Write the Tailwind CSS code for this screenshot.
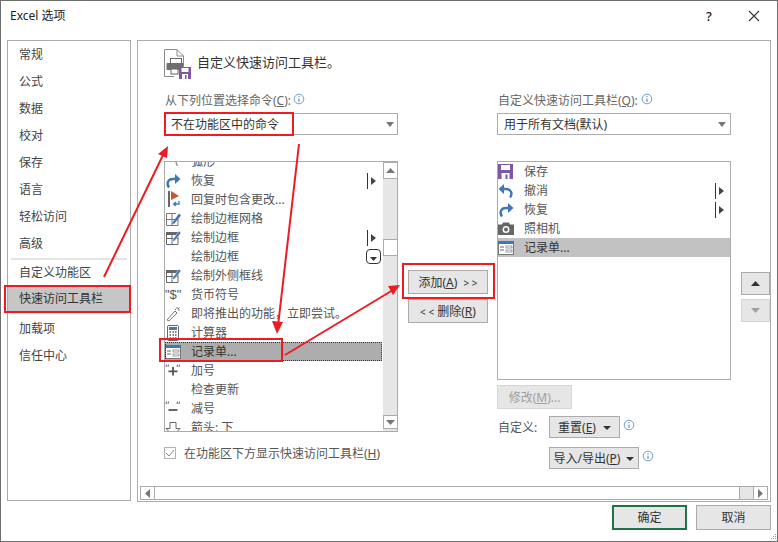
<!DOCTYPE html>
<html lang="zh-CN">
<head>
<meta charset="utf-8">
<title>Excel 选项</title>
<script src="https://cdn.jsdelivr.net/npm/@tailwindcss/browser@4"></script>
</head>
<body class="m-0 bg-white">
<div class="relative w-[778px] h-[542px] overflow-hidden bg-white border border-[#6e6e6e] flex flex-col text-[12px] leading-[18px] text-[#444] font-['Noto_Sans','Noto_Sans_CJK_SC',sans-serif]">
  <!-- title bar -->
  <div class="flex items-center h-[30px] shrink-0 pl-[9px] text-[#222]">
    <span class="text-[12px]">Excel 选项</span>
    <span class="ml-auto w-[12px] text-center text-[13px] font-medium mr-[33px]">?</span>
    <svg class="mr-[17px]" width="12" height="12" viewBox="0 0 12 12"><path d="M1 1L11 11M11 1L1 11" stroke="#333" stroke-width="1.1" fill="none"/></svg>
  </div>
  <div class="flex flex-1 min-h-0 pl-[6px] pr-[6px] pt-[9px] gap-[6px]">
    <!-- sidebar -->
    <nav class="w-[124px] h-[461px] border border-[#ababab] flex flex-col shrink-0">
      <div class="h-[27px] shrink-0 pl-[11px] flex items-center">常规</div>
      <div class="h-[27px] shrink-0 pl-[11px] flex items-center">公式</div>
      <div class="h-[27px] shrink-0 pl-[11px] flex items-center">数据</div>
      <div class="h-[27px] shrink-0 pl-[11px] flex items-center">校对</div>
      <div class="h-[27px] shrink-0 pl-[11px] flex items-center">保存</div>
      <div class="h-[27px] shrink-0 pl-[11px] flex items-center">语言</div>
      <div class="h-[27px] shrink-0 pl-[11px] flex items-center">轻松访问</div>
      <div class="h-[27px] shrink-0 pl-[11px] flex items-center">高级</div>
      <div class="mx-[3px] h-[2px] shrink-0 bg-[#e4e4e4] mt-[1px]"></div>
      <div class="h-[26px] shrink-0 pl-[11px] flex items-center">自定义功能区</div>
      <div class="h-[26px] shrink-0 pl-[11px] flex items-center bg-[#c6c6c6] text-[#333]">快速访问工具栏</div>
      <div class="mx-[3px] h-[2px] shrink-0 bg-[#e4e4e4] mb-[1px]"></div>
      <div class="h-[27px] shrink-0 pl-[11px] flex items-center">加载项</div>
      <div class="h-[27px] shrink-0 pl-[11px] flex items-center">信任中心</div>
    </nav>
    <!-- main panel -->
    <main class="w-[634px] h-[462px] border border-[#ababab] flex flex-col shrink-0 overflow-hidden">
      <header class="flex items-start h-[49px] shrink-0 pl-[26px]">
        <svg class="mt-[8px]" width="28" height="30" viewBox="0 0 28 30">
          <path d="M.5 .5H13L19.500 7V17M.5 .5V27.500H10" fill="#fff" stroke="#8a8a8a"/>
          <path d="M13 .5V7H19.500" fill="none" stroke="#8a8a8a"/>
          <rect x="6.500" y="9.500" width="11" height="5" fill="#fff" stroke="#666"/>
          <rect x="2.500" y="14" width="17" height="7" rx="1" fill="#6f6f6f"/>
          <rect x="7" y="20" width="7" height="5" fill="#fff" stroke="#666"/>
          <rect x="15" y="18" width="12" height="12" fill="#8156a4"/>
          <rect x="17.500" y="19" width="7" height="4" fill="#fff"/>
          <rect x="18" y="25" width="6" height="5" fill="#fff"/>
          <rect x="21" y="26" width="1.500" height="4" fill="#8156a4"/>
        </svg>
        <h1 class="ml-[5px] mt-[12px] text-[13px] font-normal text-[#333]">自定义快速访问工具栏。</h1>
      </header>
      <div class="flex flex-1 min-h-0 pl-[26px]">
        <!-- left column -->
        <section class="w-[234px] shrink-0 flex flex-col">
          <div class="h-[20px] flex items-center pl-px pt-px text-[#666]">从下列位置选择命令(<u>C</u>):
            <svg class="ml-[2px] -mt-[3px]" width="12" height="12" viewBox="0 0 12 12"><circle cx="6" cy="6" r="4.800" fill="none" stroke="#6c9fd3"/><path d="M6 5.500V9M6 3V4.200" stroke="#4f7fb5"/></svg>
          </div>
          <div class="mt-[3px] h-[22px] border border-[#ababab] flex items-center pl-[6px] pr-[3px] pt-px text-[#333]">不在功能区中的命令
            <svg class="ml-auto" width="8" height="5" viewBox="0 0 8 5"><path d="M0 0H8L4 5Z" fill="#777"/></svg>
          </div>
          <div class="mt-[26px] h-[271px] border border-[#ababab] flex overflow-hidden relative">
            <div class="w-[217px] -mt-[10px] flex flex-col shrink-0 text-[#555]">
              <div class="h-[19px] shrink-0 flex items-center"><span class="w-[26px] shrink-0 pl-[9px] text-[10px] leading-none">\</span>弧形</div>
              <div class="h-[19px] shrink-0 flex items-center">
                <span class="w-[26px] shrink-0"><svg width="16" height="16" viewBox="0 0 16 16"><path d="M4 14.500C1 10.500 3 6 8 6H11" fill="none" stroke="#3f78b5" stroke-width="2.400"/><path d="M10 1L15.500 6L10 11Z" fill="#3f78b5"/></svg></span>恢复
                <span class="ml-auto mr-[6px] flex items-center gap-[3px]"><span class="w-px h-[16px] bg-[#333]"></span><svg width="5" height="8" viewBox="0 0 5 8"><path d="M0 0L5 4L0 8Z" fill="#444"/></svg></span>
              </div>
              <div class="h-[19px] shrink-0 flex items-center">
                <span class="w-[26px] shrink-0"><svg width="16" height="17" viewBox="0 0 16 17"><rect x="3" y="0" width="2" height="16" fill="#666"/><path d="M6 0L14 5L6 9Z" fill="#c8552b"/><path d="M14 10V13H9M11 11L8.500 13L11 15" fill="none" stroke="#3f78b5" stroke-width="1.300"/></svg></span>回复时包含更改...
              </div>
              <div class="h-[19px] shrink-0 flex items-center">
                <span class="w-[26px] shrink-0"><svg width="16" height="16" viewBox="0 0 16 16"><path d="M1.500 2.500H11M1.500 2.500V14.500H13V8M1.500 8.500H13M7 2.500V14.500" fill="none" stroke="#777"/><path d="M7.500 11.500L14 2.500L16 4.500L9.500 12.500L7 13Z" fill="#3f78b5"/></svg></span>绘制边框网格
              </div>
              <div class="h-[19px] shrink-0 flex items-center">
                <span class="w-[26px] shrink-0"><svg width="16" height="16" viewBox="0 0 16 16"><rect x="1" y="2" width="12" height="3" fill="#666"/><path d="M1.500 2.500V14.500H13V5M1.500 8.500H13M7 2.500V14.500" fill="none" stroke="#666"/><path d="M7.500 10L14 1L16 3L9.500 11L7 11.500Z" fill="#3f78b5" stroke="#fff" stroke-width=".5"/></svg></span>绘制边框
                <span class="ml-auto mr-[6px] flex items-center gap-[3px]"><span class="w-px h-[16px] bg-[#333]"></span><svg width="5" height="8" viewBox="0 0 5 8"><path d="M0 0L5 4L0 8Z" fill="#444"/></svg></span>
              </div>
              <div class="h-[19px] shrink-0 flex items-center">
                <span class="w-[26px] shrink-0"></span>绘制边框
                <span class="ml-auto mr-[1px] w-[15px] h-[15px] border border-[#333] rounded-[4px] flex items-center justify-center pt-[4px]"><svg width="7" height="4" viewBox="0 0 7 4"><path d="M0 0H7L3.500 4Z" fill="#333"/></svg></span>
              </div>
              <div class="h-[19px] shrink-0 flex items-center">
                <span class="w-[26px] shrink-0"><svg width="16" height="16" viewBox="0 0 16 16"><rect x="1" y="2" width="12" height="3" fill="#666"/><path d="M1.500 2.500V14.500H13V5M1.500 8.500H13M7 2.500V14.500" fill="none" stroke="#666"/><path d="M7.500 10L14 1L16 3L9.500 11L7 11.500Z" fill="#3f78b5" stroke="#fff" stroke-width=".5"/></svg></span>绘制外侧框线
              </div>
              <div class="h-[19px] shrink-0 flex items-center">
                <span class="w-[26px] shrink-0 text-[13px] leading-none text-[#555] font-['Liberation_Sans',sans-serif]">"$"</span>货币符号
              </div>
              <div class="h-[19px] shrink-0 flex items-center">
                <span class="w-[26px] shrink-0"><svg width="16" height="16" viewBox="0 0 16 16"><path d="M2 14L10 5L12 7L4 15Z" fill="#fff" stroke="#777"/><path d="M12 1V3M15 4H13M14.500 1.500L13 3M11 4L10 3" stroke="#777"/></svg></span>即将推出的功能，立即尝试。
              </div>
              <div class="h-[19px] shrink-0 flex items-center">
                <span class="w-[26px] shrink-0 pl-[2px]"><svg width="12" height="16" viewBox="0 0 12 16"><rect x=".5" y=".5" width="11" height="15" rx="1" fill="#fff" stroke="#666"/><rect x="2" y="2" width="8" height="3" fill="#3f78b5"/><path d="M2.500 7H4M5.500 7H7M8 7H9.500M2.500 10H4M5.500 10H7M8 10H9.500M2.500 13H4M5.500 13H7M8 13H9.500" stroke="#555" stroke-width="1.500"/></svg></span>计算器
              </div>
              <div class="h-[19px] shrink-0 flex items-center bg-[#adadad] outline-1 -outline-offset-1 outline-dotted outline-[#333] text-[#333]">
                <span class="w-[26px] shrink-0"><svg width="16" height="14" viewBox="0 0 16 14"><rect x=".5" y=".5" width="15" height="13" fill="#fff" stroke="#777"/><rect x="0" y="0" width="16" height="3" fill="#3f78b5"/><path d="M2 6H6M2 9H6" stroke="#666"/><rect x="8" y="5" width="6" height="2" fill="#fff" stroke="#777" stroke-width=".7"/><rect x="8" y="9" width="6" height="2" fill="#fff" stroke="#777" stroke-width=".7"/></svg></span>记录单...
              </div>
              <div class="h-[19px] shrink-0 flex items-center">
                <span class="w-[26px] shrink-0"><svg width="16" height="16" viewBox="0 0 16 16"><path d="M3.500 8.300H12.500M8 4V12.500" stroke="#555" stroke-width="1.800"/><path d="M1.500 1.500L1 4M3.500 1.500L3 4M12.500 1.500L12 4M14.500 1.500L14 4" stroke="#666"/></svg></span>加号
              </div>
              <div class="h-[19px] shrink-0 flex items-center"><span class="w-[26px] shrink-0"></span>检查更新</div>
              <div class="h-[19px] shrink-0 flex items-center">
                <span class="w-[26px] shrink-0"><svg width="16" height="16" viewBox="0 0 16 16"><path d="M3.500 9H12.500" stroke="#555" stroke-width="1.800"/><path d="M1.500 .5L1 3M3.500 .5L3 3M12.500 .5L12 3M14.500 .5L14 3" stroke="#666"/></svg></span>减号
              </div>
              <div class="h-[19px] shrink-0 flex items-center">
                <span class="w-[26px] shrink-0"><svg width="16" height="16" viewBox="0 0 16 16"><path d="M5 2.500H11V8.500H15L8 15.500L1 8.500H5Z" fill="#fff" stroke="#666"/></svg></span>箭头: 下
              </div>
            </div>
            <!-- list scrollbar -->
            <div class="w-[15px] ml-px bg-[#e6e6e6] flex flex-col shrink-0">
              <div class="h-[17px] bg-white border border-[#ababab] flex items-center justify-center shrink-0"><svg width="9" height="5" viewBox="0 0 9 5"><path d="M0 5H9L4.500 0Z" fill="#777"/></svg></div>
              <div class="mt-[60px] h-[17px] bg-white border border-[#ababab] shrink-0"></div>
              <div class="mt-auto mb-[2px] h-[14px] bg-white border border-[#ababab] flex items-center justify-center shrink-0"><svg width="9" height="5" viewBox="0 0 9 5"><path d="M0 0H9L4.500 5Z" fill="#777"/></svg></div>
            </div>
          </div>
          <label class="mt-[15px] flex items-center h-[12px]">
            <span class="w-[12px] h-[12px] border border-[#b4b4b4] flex items-center justify-center shrink-0"><svg width="10" height="8" viewBox="0 0 10 8"><path d="M1 4L4 7L9 1" fill="none" stroke="#888"/></svg></span>
            <span class="ml-[8px] pt-[2px] text-[#555]">在功能区下方显示快速访问工具栏(<u>H</u>)</span>
          </label>
        </section>
        <!-- middle buttons -->
        <section class="w-[80px] ml-[10px] shrink-0 flex flex-col gap-[5px] pt-[180px]">
          <div class="h-[24px] pt-px bg-[#e6e6e6] border border-[#ababab] flex items-center justify-center text-[#333]">添加(<u>A</u>)&nbsp;&nbsp;<span class="text-[10px]">&gt; &gt;</span></div>
          <div class="h-[24px] pt-[2px] bg-[#e6e6e6] border border-[#ababab] flex items-center justify-center text-[#333]"><span class="text-[10px]">&lt; &lt;</span>&nbsp;删除(<u>R</u>)</div>
        </section>
        <!-- right column -->
        <section class="w-[234px] ml-[9px] shrink-0 flex flex-col">
          <div class="h-[20px] flex items-center pl-px pt-px text-[#666]">自定义快速访问工具栏(<u>Q</u>):
            <svg class="ml-[3px] -mt-[3px]" width="12" height="12" viewBox="0 0 12 12"><circle cx="6" cy="6" r="4.800" fill="none" stroke="#6c9fd3"/><path d="M6 5.500V9M6 3V4.200" stroke="#4f7fb5"/></svg>
          </div>
          <div class="mt-[3px] h-[22px] border border-[#ababab] flex items-center pl-[6px] pr-[4px] pt-px text-[#333]">用于所有文档(默认)
            <svg class="ml-auto" width="8" height="5" viewBox="0 0 8 5"><path d="M0 0H8L4 5Z" fill="#777"/></svg>
          </div>
          <div class="mt-[26px] h-[219px] border border-[#ababab] flex flex-col text-[#555]">
            <div class="h-[19px] flex items-center shrink-0">
              <span class="w-[26px] shrink-0"><svg width="15" height="15" viewBox="0 0 15 15"><rect width="15" height="15" fill="#8156a4"/><rect x="3" y="1" width="9" height="5" fill="#fff"/><rect x="3.500" y="9" width="8" height="6" fill="#fff"/><rect x="7.500" y="10.500" width="2" height="4.500" fill="#8156a4"/></svg></span>保存
            </div>
            <div class="h-[19px] flex items-center shrink-0">
              <span class="w-[26px] shrink-0"><svg width="16" height="16" viewBox="0 0 16 16"><path d="M12 14.500C15 10.500 13 6 8 6H5" fill="none" stroke="#3f78b5" stroke-width="2.400"/><path d="M6 1L.5 6L6 11Z" fill="#3f78b5"/></svg></span>撤消
              <span class="ml-auto mr-[6px] flex items-center gap-[3px]"><span class="w-px h-[16px] bg-[#333]"></span><svg width="5" height="8" viewBox="0 0 5 8"><path d="M0 0L5 4L0 8Z" fill="#444"/></svg></span>
            </div>
            <div class="h-[19px] flex items-center shrink-0">
              <span class="w-[26px] shrink-0"><svg width="16" height="16" viewBox="0 0 16 16"><path d="M4 14.500C1 10.500 3 6 8 6H11" fill="none" stroke="#3f78b5" stroke-width="2.400"/><path d="M10 1L15.500 6L10 11Z" fill="#3f78b5"/></svg></span>恢复
              <span class="ml-auto mr-[6px] flex items-center gap-[3px]"><span class="w-px h-[16px] bg-[#333]"></span><svg width="5" height="8" viewBox="0 0 5 8"><path d="M0 0L5 4L0 8Z" fill="#444"/></svg></span>
            </div>
            <div class="h-[19px] flex items-center shrink-0">
              <span class="w-[26px] shrink-0"><svg width="16" height="13" viewBox="0 0 16 13"><path d="M0 2.500H4L5 .5H11L12 2.500H16V13H0Z" fill="#666"/><circle cx="8" cy="7.500" r="3.500" fill="#fff"/><circle cx="8" cy="7.500" r="2" fill="#666"/></svg></span>照相机
            </div>
            <div class="h-[19px] flex items-center shrink-0 bg-[#c2c2c2] text-[#333]">
              <span class="w-[26px] shrink-0"><svg width="16" height="14" viewBox="0 0 16 14"><rect x=".5" y=".5" width="15" height="13" fill="#fff" stroke="#777"/><rect x="0" y="0" width="16" height="3" fill="#3f78b5"/><path d="M2 6H6M2 9H6" stroke="#666"/><rect x="8" y="5" width="6" height="2" fill="#fff" stroke="#777" stroke-width=".7"/><rect x="8" y="9" width="6" height="2" fill="#fff" stroke="#777" stroke-width=".7"/></svg></span>记录单...
            </div>
          </div>
          <div class="mt-[5px] w-[75px] h-[24px] pt-px bg-[#e6e6e6] border border-[#d6d6d6] flex items-center justify-center text-[#a0a0a0]">修改(<u>M</u>)...</div>
          <div class="mt-[7px] flex items-center h-[22px]">
            <span class="w-[52px] pl-px pt-px text-[#555]">自定义:</span>
            <div class="w-[71px] h-[22px] pt-px bg-[#e6e6e6] border border-[#ababab] flex items-center justify-center gap-[7px] text-[#333]"><span>重置(<u>E</u>)</span><svg width="8" height="4" viewBox="0 0 8 4"><path d="M0 0H8L4 4Z" fill="#333"/></svg></div>
            <svg class="ml-[3px] -mt-[5px]" width="12" height="12" viewBox="0 0 12 12"><circle cx="6" cy="6" r="4.800" fill="none" stroke="#6c9fd3"/><path d="M6 5.500V9M6 3V4.200" stroke="#4f7fb5"/></svg>
          </div>
          <div class="mt-[9px] flex items-center h-[22px] pl-[52px]">
            <div class="w-[90px] h-[22px] pt-px bg-[#e6e6e6] border border-[#ababab] flex items-center justify-center gap-[6px] text-[#333] shrink-0"><span>导入/导出(<u>P</u>)</span><svg width="8" height="4" viewBox="0 0 8 4"><path d="M0 0H8L4 4Z" fill="#333"/></svg></div>
            <svg class="ml-[3px] -mt-[5px] shrink-0" width="12" height="12" viewBox="0 0 12 12"><circle cx="6" cy="6" r="4.800" fill="none" stroke="#6c9fd3"/><path d="M6 5.500V9M6 3V4.200" stroke="#4f7fb5"/></svg>
          </div>
        </section>
        <!-- order buttons -->
        <section class="w-[29px] ml-[10px] shrink-0 flex flex-col gap-[4px] pt-[182px]">
          <div class="h-[23px] bg-[#e6e6e6] border border-[#ababab] flex items-center justify-center"><svg width="9" height="5" viewBox="0 0 9 5"><path d="M0 5H9L4.500 0Z" fill="#333"/></svg></div>
          <div class="h-[23px] bg-[#e6e6e6] border border-[#d6d6d6] flex items-center justify-center"><svg width="9" height="5" viewBox="0 0 9 5"><path d="M0 0H9L4.500 5Z" fill="#a0a0a0"/></svg></div>
        </section>
      </div>
      <!-- horizontal scrollbar -->
      <div class="mx-[2px] mb-px h-[14px] shrink-0 flex border border-[#ababab] bg-white">
        <div class="w-[14px] bg-white border-r border-[#ababab] flex items-center justify-center"><svg width="5" height="9" viewBox="0 0 5 9"><path d="M5 0V9L0 4.500Z" fill="#777"/></svg></div>
        <div class="flex-1"></div>
        <div class="w-[14px] bg-[#e6e6e6] border-l border-[#ababab]"></div>
        <div class="w-[14px] bg-white border-l border-[#ababab] flex items-center justify-center"><svg width="5" height="9" viewBox="0 0 5 9"><path d="M0 0V9L5 4.500Z" fill="#777"/></svg></div>
      </div>
    </main>
  </div>
  <!-- dialog footer -->
  <footer class="h-[41px] shrink-0 flex justify-end gap-[9px] pr-[6px] pt-[5px] text-[#333]">
    <div class="w-[75px] h-[25px] bg-[#e6e6e6] border-2 border-[#217346] flex items-center justify-center">确定</div>
    <div class="w-[75px] h-[25px] bg-[#e6e6e6] border border-[#ababab] flex items-center justify-center">取消</div>
  </footer>
  <!-- resize grip -->
  <svg class="absolute right-0 bottom-0" width="8" height="8" viewBox="0 0 8 8"><path d="M6 1h1v1H6zM4 3h1v1H4zM6 3h1v1H6zM2 5h1v1H2zM4 5h1v1H4zM6 5h1v1H6z" fill="#999"/></svg>
  <!-- red annotations above the dialog -->
  <svg class="absolute -left-px -top-px pointer-events-none" width="778" height="542" viewBox="0 0 778 542">
    <g fill="none" stroke="#ed1c24" stroke-width="2">
      <rect x="165" y="113" width="128" height="22"/>
      <rect x="5" y="286" width="125" height="26"/>
      <rect x="160" y="339" width="122" height="22"/>
      <rect x="403" y="264" width="91" height="34"/>
      <path d="M104 277L165 151M299 144L278 326M285 355L393 290"/>
    </g>
    <g fill="#ed1c24">
      <path d="M168 146L167 158L158 154Z"/>
      <path d="M277 334L272 321L283 322Z"/>
      <path d="M400 285L393 295L388 286Z"/>
    </g>
  </svg>
</div>
</body>
</html>
